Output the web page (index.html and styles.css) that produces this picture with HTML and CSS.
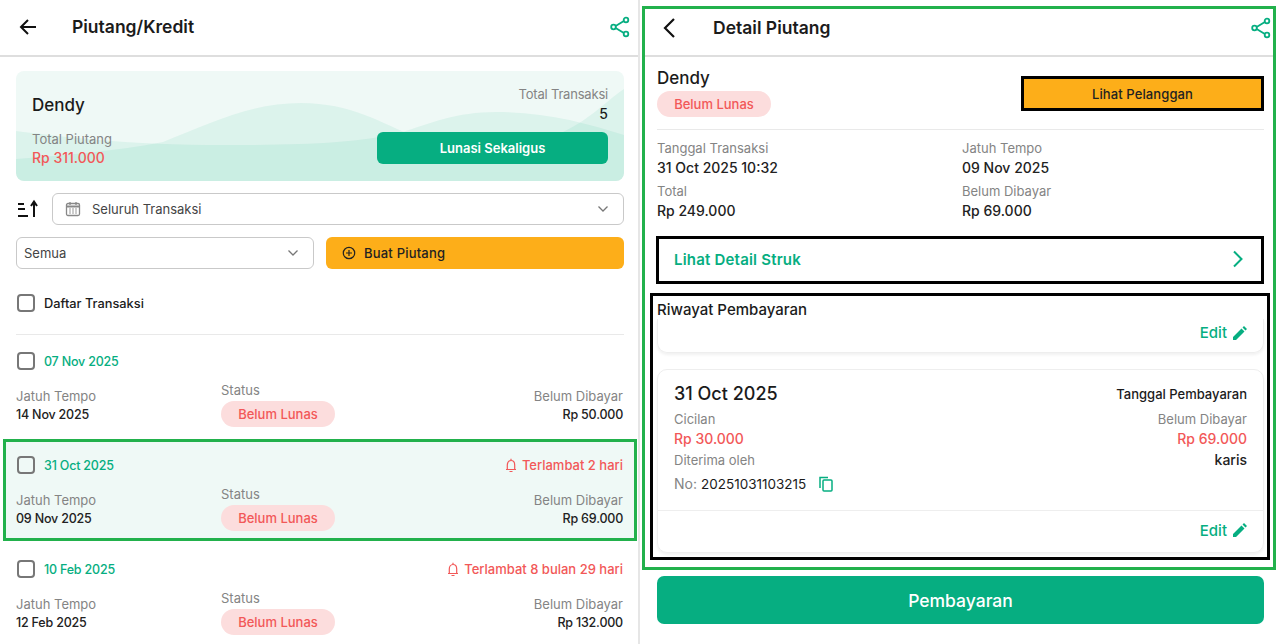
FILE: index.html
```html
<!DOCTYPE html>
<html lang="en">
<head>
    <meta charset="UTF-8">
    <title>Piutang</title>
    <link rel="stylesheet" href="styles.css">
</head>
<body>
<div class="screen">
    <!-- left: customer list -->
    <div class="panel panel-list">
        <div class="topbar">
            <svg class="back" width="20" height="20" viewBox="0 0 20 20"><path d="M18 10H3M10 3l-7 7 7 7" fill="none" stroke="#111" stroke-width="2"/></svg>
            <h1>Piutang/Kredit</h1>
            <svg class="share" width="20" height="22" viewBox="0 0 20 22"><g fill="none" stroke="#06ae81" stroke-width="1.800"><path d="M4 11L15.500 4M4 11l11.500 7"/><circle cx="16" cy="4" r="2.300" fill="#fff"/><circle cx="3.500" cy="11" r="2.300" fill="#fff"/><circle cx="16" cy="18" r="2.300" fill="#fff"/></g></svg>
        </div>
        <div class="list-body">
            <div class="summary">
                <svg class="wave" viewBox="0 0 608 110" preserveAspectRatio="none">
                    <path d="M0 88C50 84 100 80 147 71C195 52 235 32 285 32C335 32 365 52 400 66C440 76 510 76 545 62C575 48 590 30 608 18V110H0Z" fill="#06ae81" fill-opacity="0.08"/>
                    <path d="M0 60C50 66 110 74 210 74C290 74 340 72 384 62C415 52 440 41 480 41C530 41 570 52 608 64V110H0Z" fill="#06ae81" fill-opacity="0.08"/>
                </svg>
                <div class="summary-left">
                    <div class="summary-name">Dendy</div>
                    <div>
                        <div class="label">Total Piutang</div>
                        <div class="summary-amount">Rp 311.000</div>
                    </div>
                </div>
                <div class="summary-right">
                    <div class="label">Total Transaksi</div>
                    <div class="summary-count">5</div>
                    <button class="btn-green">Lunasi Sekaligus</button>
                </div>
            </div>

            <div class="filter-row">
                <svg width="24" height="20" viewBox="0 0 24 20"><path d="M2 5h6M2 10h7M2 17h10" stroke="#111" stroke-width="2"/><path d="M18 18V3M15 7l3-4.500 3 4.500" fill="none" stroke="#111" stroke-width="2"/></svg>
                <div class="select select-wide">
                    <svg width="16" height="16" viewBox="0 0 16 16"><rect x="1.500" y="2.500" width="13" height="12" rx="1.500" fill="none" stroke="#888" stroke-width="1.300"/><path d="M1.500 5.500h13" stroke="#888" stroke-width="2"/><path d="M5 1v3M11 1v3" stroke="#888" stroke-width="1.300"/><path d="M4 8h2M7 8h2M10 8h2M4 10h2M7 10h2M10 10h2M4 12h2M7 12h2M10 12h2" stroke="#999"/></svg>
                    <span>Seluruh Transaksi</span>
                    <svg class="chev" width="12" height="8" viewBox="0 0 12 8"><path d="M1.500 1.500L6 6l4.500-4.500" fill="none" stroke="#777" stroke-width="1.300"/></svg>
                </div>
            </div>

            <div class="action-row">
                <div class="select">
                    <span>Semua</span>
                    <svg class="chev" width="12" height="8" viewBox="0 0 12 8"><path d="M1.500 1.500L6 6l4.500-4.500" fill="none" stroke="#777" stroke-width="1.300"/></svg>
                </div>
                <button class="btn-amber">
                    <svg width="14" height="14" viewBox="0 0 14 14"><circle cx="7" cy="7" r="5.700" fill="none" stroke="#222" stroke-width="1.200"/><path d="M7 4v6M4 7h6" stroke="#222" stroke-width="1.200"/></svg>
                    Buat Piutang
                </button>
            </div>

            <div class="check-row all">
                <span class="check"></span>
                <span>Daftar Transaksi</span>
            </div>
        </div>

        <div class="tx">
            <div class="tx-head">
                <span class="check"></span>
                <span class="tx-date">07 Nov 2025</span>
            </div>
            <div class="tx-grid">
                <div class="tx-due"><div class="label">Jatuh Tempo</div><div class="value">14 Nov 2025</div></div>
                <div class="tx-status"><div class="label">Status</div><span class="pill">Belum Lunas</span></div>
                <div class="tx-left"><div class="label">Belum Dibayar</div><div class="value">Rp 50.000</div></div>
            </div>
        </div>

        <div class="tx active">
            <div class="tx-head">
                <span class="check"></span>
                <span class="tx-date">31 Oct 2025</span>
                <span class="late"><svg width="14" height="15" viewBox="0 0 14 15"><path d="M2 11.500h10M3.300 11.500V7c0-2.500 1.500-4.500 3.700-4.500s3.700 2 3.700 4.500v4.500M7 .8v1.700M5.500 13.500h3" fill="none" stroke="#f25858" stroke-width="1.200"/></svg>Terlambat 2 hari</span>
            </div>
            <div class="tx-grid">
                <div class="tx-due"><div class="label">Jatuh Tempo</div><div class="value">09 Nov 2025</div></div>
                <div class="tx-status"><div class="label">Status</div><span class="pill">Belum Lunas</span></div>
                <div class="tx-left"><div class="label">Belum Dibayar</div><div class="value">Rp 69.000</div></div>
            </div>
        </div>

        <div class="tx">
            <div class="tx-head">
                <span class="check"></span>
                <span class="tx-date">10 Feb 2025</span>
                <span class="late"><svg width="14" height="15" viewBox="0 0 14 15"><path d="M2 11.500h10M3.300 11.500V7c0-2.500 1.500-4.500 3.700-4.500s3.700 2 3.700 4.500v4.500M7 .8v1.700M5.500 13.500h3" fill="none" stroke="#f25858" stroke-width="1.200"/></svg>Terlambat 8 bulan 29 hari</span>
            </div>
            <div class="tx-grid">
                <div class="tx-due"><div class="label">Jatuh Tempo</div><div class="value">12 Feb 2025</div></div>
                <div class="tx-status"><div class="label">Status</div><span class="pill">Belum Lunas</span></div>
                <div class="tx-left"><div class="label">Belum Dibayar</div><div class="value">Rp 132.000</div></div>
            </div>
        </div>
    </div>

    <!-- right: detail -->
    <div class="panel panel-detail">
        <div class="detail-frame">
            <div class="topbar">
                <svg class="back" width="14" height="20" viewBox="0 0 14 20"><path d="M12 1L3 10l9 9" fill="none" stroke="#111" stroke-width="2.200"/></svg>
                <h1>Detail Piutang</h1>
                <svg class="share" width="20" height="22" viewBox="0 0 20 22"><g fill="none" stroke="#06ae81" stroke-width="1.800"><path d="M4 11L15.500 4M4 11l11.500 7"/><circle cx="16" cy="4" r="2.300" fill="#fff"/><circle cx="3.500" cy="11" r="2.300" fill="#fff"/><circle cx="16" cy="18" r="2.300" fill="#fff"/></g></svg>
            </div>
            <div class="detail-head">
                <div>
                    <div class="detail-name">Dendy</div>
                    <span class="pill">Belum Lunas</span>
                </div>
                <button class="btn-customer">Lihat Pelanggan</button>
            </div>
            <div class="detail-grid">
                <div><div class="label">Tanggal Transaksi</div><div class="value-lg">31 Oct 2025 10:32</div></div>
                <div><div class="label">Jatuh Tempo</div><div class="value-lg">09 Nov 2025</div></div>
                <div><div class="label">Total</div><div class="value-lg">Rp 249.000</div></div>
                <div><div class="label">Belum Dibayar</div><div class="value-lg">Rp 69.000</div></div>
            </div>
            <div class="receipt-link">
                <span>Lihat Detail Struk</span>
                <svg width="12" height="18" viewBox="0 0 12 18"><path d="M2 1.500L9.500 9 2 16.500" fill="none" stroke="#06ae81" stroke-width="2"/></svg>
            </div>
            <div class="history">
                <div class="history-title">Riwayat Pembayaran</div>
                <div class="pay-card pay-stub">
                    <div class="edit">Edit <svg width="14" height="14" viewBox="0 0 14 14"><path d="M0 14V11L8.500 2.500l3 3L3 14ZM9.500 1.500L11 0l3 3-1.500 1.500Z" fill="#06ae81"/></svg></div>
                </div>
                <div class="pay-card">
                    <div class="pay-main">
                        <div class="pay-top">
                            <span class="pay-date">31 Oct 2025</span>
                            <span class="pay-caption">Tanggal Pembayaran</span>
                        </div>
                        <div class="pay-line pay-labels"><span class="label">Cicilan</span><span class="label">Belum Dibayar</span></div>
                        <div class="pay-line pay-amounts"><span>Rp 30.000</span><span>Rp 69.000</span></div>
                        <div class="pay-line pay-by"><span class="label">Diterima oleh</span><span class="value-lg">karis</span></div>
                        <div class="pay-no">
                            <span class="label">No:</span> <span>20251031103215</span>
                            <svg width="14" height="16" viewBox="0 0 14 16"><path d="M1 12V1.500h8" fill="none" stroke="#06ae81" stroke-width="1.500"/><rect x="4" y="4" width="9" height="11" rx="1" fill="none" stroke="#06ae81" stroke-width="1.500"/></svg>
                        </div>
                    </div>
                    <div class="edit edit-foot">Edit <svg width="14" height="14" viewBox="0 0 14 14"><path d="M0 14V11L8.500 2.500l3 3L3 14ZM9.500 1.500L11 0l3 3-1.500 1.500Z" fill="#06ae81"/></svg></div>
                </div>
            </div>
        </div>
        <button class="btn-pay">Pembayaran</button>
    </div>
</div>
</body>
</html>
```

FILE: styles.css
```css
* {
    box-sizing: border-box;
}
html, body {
    margin: 0;
    height: 644px;
    overflow: hidden;
}
body {
    font-family: Inter, "Noto Sans", sans-serif;
    color: #1b1b1b;
    background: #fff;
}
button {
    font-family: inherit;
    border: none;
    cursor: pointer;
}
.screen {
    display: flex;
    height: 644px;
}
.panel {
    width: 640px;
    height: 644px;
    overflow: hidden;
    flex-shrink: 0;
}
.panel-list {
    border-right: 2px solid #e6e6e6;
}
.panel-detail {
    width: 638px;
    padding: 6px 2px 0 2px;
}

/* top bars */
.topbar {
    display: flex;
    align-items: center;
    height: 57px;
    padding: 0 8px 2px 18px;
    border-bottom: 2px solid #dedede;
}
.topbar h1 {
    margin: 0 0 0 34px;
    font-size: 17.500px;
    font-weight: 600;
    flex: 1;
}
.panel-detail .topbar {
    height: 48px;
    padding: 0 2px 9px 17px;
}
.panel-detail .topbar h1 {
    margin-left: 37px;
}

/* shared text */
.label {
    font-size: 13px;
    color: #848484;
}
.value {
    font-size: 12.500px;
    letter-spacing: -0.2px;
    font-weight: 500;
    color: #222;
}
.value-lg {
    font-size: 14px;
    font-weight: 500;
    color: #222;
}
.pill {
    display: inline-flex;
    align-items: center;
    justify-content: center;
    width: 114px;
    height: 26px;
    border-radius: 13px;
    background: #fcdddd;
    color: #f25858;
    font-size: 13px;
    font-weight: 500;
}

/* summary card */
.list-body {
    padding: 14px 14px 0 16px;
}
.summary {
    position: relative;
    display: flex;
    justify-content: space-between;
    height: 110px;
    padding: 15px 16px 15px;
    background: #eff9f6;
    border-radius: 8px;
    overflow: hidden;
}
.wave {
    position: absolute;
    left: 0;
    top: 0;
    width: 100%;
    height: 100%;
}
.summary-left, .summary-right {
    position: relative;
    display: flex;
    flex-direction: column;
}
.summary-left {
    justify-content: space-between;
    padding-top: 9px;
}
.summary-right {
    align-items: flex-end;
}
.summary-right .label {
    letter-spacing: -0.2px;
}
.summary-name {
    font-size: 17px;
    font-weight: 500;
}
.summary-amount {
    font-size: 14px;
    font-weight: 500;
    color: #f25858;
    margin-top: 2px;
}
.summary-count {
    font-size: 14px;
    font-weight: 500;
    margin-top: 3px;
}
.btn-green {
    width: 231px;
    height: 32px;
    margin-top: 10px;
    border-radius: 6px;
    background: #06ae81;
    color: #fff;
    font-size: 13px;
    font-weight: 600;
}

/* filters */
.filter-row {
    display: flex;
    align-items: center;
    gap: 12px;
    margin-top: 12px;
}
.select {
    display: flex;
    align-items: center;
    height: 32px;
    padding: 0 7px;
    border: 1px solid #c9c9c9;
    border-radius: 6px;
    font-size: 13px;
    color: #444;
    flex: 1;
}
.select-wide {
    gap: 11px;
    padding-left: 12px;
    padding-right: 14px;
}
.chev {
    margin-left: auto;
}
.action-row {
    display: flex;
    gap: 12px;
    margin-top: 12px;
}
.action-row .select {
    flex: none;
    width: 298px;
    padding-right: 14px;
}
.btn-amber {
    display: flex;
    align-items: center;
    gap: 8px;
    flex: 1;
    height: 32px;
    padding: 0 16px;
    border-radius: 6px;
    background: #fdae19;
    color: #222;
    font-size: 13px;
    letter-spacing: 0.2px;
    font-weight: 500;
}
.check {
    display: inline-block;
    width: 18px;
    height: 18px;
    border: 2px solid #777;
    border-radius: 4px;
    flex-shrink: 0;
}
.check-row {
    display: flex;
    align-items: center;
    gap: 9px;
    font-size: 12.800px;
    font-weight: 500;
    padding-left: 1px;
}
.all {
    height: 66px;
    padding-top: 3px;
    border-bottom: 1px solid #e9e9e9;
}

/* transactions */
.tx {
    height: 104px;
    padding: 17px 15px 0 16px;
}
.tx.active {
    width: 634px;
    height: 102px;
    margin: 0 0 2px 3px;
    padding: 14px 11px 0 10px;
    background: #eff9f6;
    border: 3px solid #22b14c;
}
.tx-head {
    display: flex;
    align-items: center;
    gap: 9px;
    padding-left: 1px;
}
.tx-date {
    font-size: 12.500px;
    letter-spacing: -0.2px;
    font-weight: 500;
    color: #06ae81;
}
.late {
    display: flex;
    align-items: center;
    gap: 4px;
    margin-left: auto;
    font-size: 13px;
    font-weight: 500;
    color: #f25858;
}
.tx-grid {
    display: grid;
    grid-template-columns: 205px 1fr auto;
    align-items: end;
    margin-top: 12px;
}
.tx-due, .tx-left {
    padding-bottom: 5px;
}
.tx-due .label, .tx-left .label {
    margin-bottom: 3px;
}
.tx-status .label {
    margin-bottom: 3px;
}
.tx-left {
    text-align: right;
}

/* detail */
.detail-frame {
    height: 564px;
    border: 3px solid #22b14c;
}
.detail-head {
    display: flex;
    justify-content: space-between;
    align-items: flex-start;
    margin: 0 9px 0 12px;
    padding: 11px 0 12px;
    border-bottom: 1px solid #e9e9e9;
}
.detail-name {
    font-size: 17px;
    font-weight: 500;
    margin-bottom: 3px;
}
.btn-customer {
    width: 243px;
    height: 35px;
    margin-top: 8px;
    background: #fdae19;
    border: 3px solid #000;
    color: #222;
    font-size: 13px;
    letter-spacing: 0.1px;
    font-weight: 500;
}
.detail-grid {
    display: grid;
    grid-template-columns: 305px 1fr;
    row-gap: 7px;
    margin: 10px 9px 0 12px;
}
.detail-grid .label {
    margin-bottom: 3px;
}
.receipt-link {
    display: flex;
    justify-content: space-between;
    align-items: center;
    height: 48px;
    margin: 17px 9px 0 11px;
    padding: 0 17px 2px 15px;
    border: 3px solid #000;
    color: #06ae81;
    font-size: 15px;
    letter-spacing: 0.2px;
    font-weight: 600;
}
.history {
    height: 267px;
    margin: 9px 3px 0 5px;
    padding: 4px 3px 0 4px;
    border: 3px solid #000;
}
.history-title {
    font-size: 15px;
    font-weight: 500;
}
.pay-card {
    border: 1px solid #eeeeee;
    border-radius: 10px;
    box-shadow: 0 2px 3px rgba(0, 0, 0, 0.06);
}
.pay-stub {
    height: 34px;
    padding-top: 4px;
    border-top: none;
    border-radius: 0 0 10px 10px;
}
.edit {
    display: flex;
    justify-content: flex-end;
    align-items: center;
    gap: 6px;
    padding-right: 16px;
    font-size: 15px;
    font-weight: 500;
    color: #06ae81;
}
.pay-main {
    height: 141px;
    padding: 13px 16px 0;
    border-bottom: 1px solid #eeeeee;
}
.pay-card:last-child {
    height: 184px;
    margin-top: 16px;
}
.pay-top, .pay-line {
    display: flex;
    justify-content: space-between;
    align-items: center;
}
.pay-date {
    font-size: 18px;
    font-weight: 500;
}
.pay-caption {
    font-size: 13px;
    font-weight: 500;
}
.pay-labels {
    margin-top: 7px;
}
.pay-amounts {
    margin-top: 3px;
    font-size: 14px;
    font-weight: 500;
    color: #f25858;
}
.pay-by {
    margin-top: 4px;
}
.pay-no {
    display: flex;
    align-items: center;
    gap: 4px;
    margin-top: 7px;
    font-size: 13.500px;
}
.pay-no .label {
    font-size: 14px;
}
.pay-no svg {
    margin-left: 9px;
}
.edit-foot {
    height: 38px;
}
.btn-pay {
    display: block;
    width: 607px;
    height: 48px;
    margin: 6px 0 0 15px;
    border-radius: 7px;
    background: #06ae81;
    color: #fff;
    font-size: 17.500px;
    font-weight: 500;
}
```
